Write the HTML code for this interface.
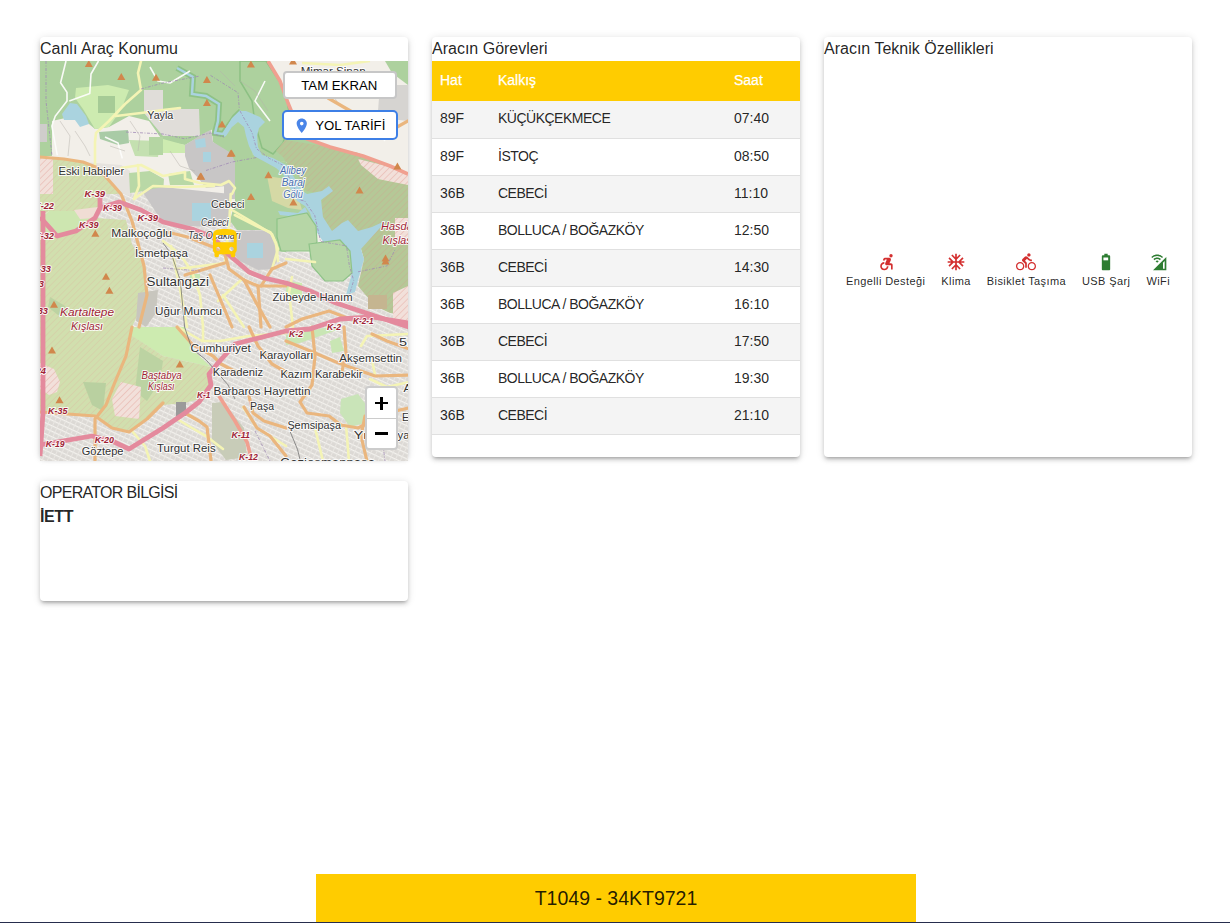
<!DOCTYPE html>
<html><head><meta charset="utf-8">
<style>
*{box-sizing:border-box;margin:0;padding:0}
html,body{width:1230px;height:923px;overflow:hidden;background:#fff;font-family:"Liberation Sans",sans-serif;color:rgba(0,0,0,0.87)}
.card{position:absolute;background:#fff;border-radius:4px;box-shadow:0px 3px 3px -2px rgba(0,0,0,0.2),0px 3px 4px 0px rgba(0,0,0,0.14),0px 1px 8px 0px rgba(0,0,0,0.12)}
.ttl{position:absolute;left:0;top:0;height:24px;line-height:24px;font-size:16px;white-space:nowrap}
#c1{left:40px;top:37px;width:368px;height:420px}
#c2{left:432px;top:37px;width:368px;height:420px;overflow:hidden}
#c3{left:824px;top:37px;width:368px;height:420px}
#c4{left:40px;top:481px;width:368px;height:120px}
#map{position:absolute;left:0;top:24px;width:368px;height:400px;overflow:hidden;background:#f2efe9}
table{position:absolute;left:0;top:24px;width:368px;border-collapse:collapse;font-size:14px}
th{background:#ffcc00;color:#fff;height:40px;text-align:left;font-weight:normal;padding:0 8px 2px 8px;-webkit-text-stroke:0.25px #fff}
td{height:37px;border-bottom:1px solid #e0e0e0;padding:0 8px 2px 8px}
td:nth-child(2){letter-spacing:-0.5px}
tr.g td{background:#f4f4f4}
.feat{position:absolute;top:215px;left:0;width:368px;display:flex;justify-content:center}
.f{display:flex;flex-direction:column;align-items:center;margin:0 8px;font-size:11px;letter-spacing:0.4px}
.f span{margin-top:3.2px;line-height:13px;color:rgba(0,0,0,0.87)}
.f svg{width:20px;height:20px;display:block}
#foot{position:absolute;left:316px;top:874px;width:600px;height:48px;background:#ffcc00;font-size:19.5px;text-align:center;line-height:48px;color:rgba(0,0,0,0.87)}
.mbtn{position:absolute;background:#fff;border-radius:4px;font-family:"Liberation Sans",sans-serif;font-size:13px;color:#000}
.mbtn span{position:absolute;top:0;line-height:24px;white-space:nowrap}
#line{position:absolute;left:0;top:922px;width:1230px;height:1px;background:#262d4d}
</style></head><body>
<div class="card" id="c1"><div class="ttl">Canlı Araç Konumu</div>
<div id="map"><svg width="368" height="400" viewBox="0 0 368 400" style="position:absolute;left:0;top:0;display:block">
<defs>
<pattern id="hO" width="4.6" height="4.6" patternUnits="userSpaceOnUse" patternTransform="rotate(45)"><rect width="4.6" height="4.6" fill="#d1dfae"/><rect width="0.6" height="4.6" fill="#dab99f" opacity="0.55"/></pattern>
<pattern id="hD" width="4.6" height="4.6" patternUnits="userSpaceOnUse" patternTransform="rotate(45)"><rect width="4.6" height="4.6" fill="#b5c897"/><rect width="0.6" height="4.6" fill="#d0a18e" opacity="0.55"/></pattern>
<pattern id="hP" width="4.6" height="4.6" patternUnits="userSpaceOnUse" patternTransform="rotate(45)"><rect width="4.6" height="4.6" fill="#f2e0da"/><rect width="0.6" height="4.6" fill="#e3a49a" opacity="0.7"/></pattern>
<pattern id="urb" width="5" height="5" patternUnits="userSpaceOnUse" patternTransform="rotate(25)"><rect width="5" height="5" fill="#dcd9d5"/><rect width="5" height="1.2" fill="#f4f2ee"/><rect width="0.9" height="5" fill="#ebe8e4"/></pattern>
</defs>
<rect width="368" height="400" fill="#f2efe9"/>

<!-- urban base -->
<polygon fill="url(#urb)" points="0,345 20,300 40,140 60,112 123,128 200,160 246,190 369,200 369,400 0,400"/>

<polygon fill="#e6e3de" points="43,101 81,104 90,110 90,135 60,125"/>
<polygon fill="#b9d8a6" points="89,112 110,110 124,118 123,132 105,130 90,132"/>
<polygon fill="#b9d8a6" points="128,113 150,110 154,124 130,124"/>
<polygon fill="#c4e0b0" points="89,79 120,80 118,96 95,95"/>
<polygon fill="#d9d7d3" points="104,29 123,29 123,49 104,49"/>
<polygon fill="#d6d4d1" points="340,24 368,24 368,60 350,58 338,50"/>

<!-- forest top -->
<polygon fill="#add19e" points="0,0 228,0 240,20 248,42 262,76 290,86 246,93 246,100 227,101 213,93 207,80 204,69 195,60 171,69 145,84 123,80 109,60 89,55 69,66 55,68 49,63 30,56 12,60 12,95 0,95"/>
<polygon fill="#add19e" points="345,0 368,0 368,24 352,12"/>
<path d="M262,2 L300,4 330,0" fill="none" stroke="#f4f4b5" stroke-width="2.6"/>
<polygon fill="#add19e" points="246,78 318,92 300,95 246,98"/>

<polygon fill="#cdebb0" points="35,37 36,27 68,24 89,29 81,49 69,66 55,68 43,48"/>
<polygon fill="#a6cb96" points="58,35 75,35 75,52 58,52"/>
<polygon fill="#aad3df" points="22,53 30,42 37,43 46,55 49,63 40,66 35,59 24,59"/>
<polygon fill="#a9cba6" points="59,71 88,69 89,82 78,84 60,78"/>
<polygon fill="#cfcdcb" points="0,63 7,63 7,81 0,81"/>
<polygon fill="#b5d6a3" points="109,76 123,76 123,94 109,94"/>
<polygon fill="#cdebb0" points="123,78 145,84 145,92 123,92"/>
<polygon fill="#e0ddd9" points="104,29 123,29 123,48 159,48 160,75 123,75 104,52"/>
<polygon fill="#add19e" stroke="#8cc083" stroke-width="1.5" points="200,0 226,0 246,30 250,60 243,82 233,93 222,87 215,62 212,40 200,20"/>

<polygon fill="#add19e" points="171,60 204,60 210,80 213,93 200,110 190,95 173,81"/>
<polygon fill="#add19e" points="240,100 275,110 290,125 300,170 246,160"/>
<path d="M137,7 L153,16 152,33 166,35 179,43 178,60 175,72 183,73 195,56 201,50" fill="none" stroke="#8fc286" stroke-width="6"/>
<path d="M137,7 L153,16 152,33 166,35 179,43 178,60 175,72 183,73 195,56 201,50" fill="none" stroke="#aad3df" stroke-width="2.5"/>
<!-- quarries -->
<polygon fill="#c8c6c6" points="145,84 166,71 171,69 173,81 191,92 195,101 195,115 186,125 166,127 159,118 149,107 145,95"/>
<polygon fill="#aad3df" points="155,79 165,77 166,86 156,87"/>
<polygon fill="#aad3df" points="163,91 171,91 171,101 163,101"/>
<polygon fill="#aad3df" points="186,108 192,108 192,114 186,114"/>
<polygon fill="#add19e" points="195,101 213,93 227,101 246,100 246,191 237,190 229,169 197,169 190,160 195,140"/>
<polygon fill="#d5d9a5" points="227,115 246,118 258,135 262,149 248,147 232,140"/>
<polygon fill="#c8c6c6" points="102,130 123,126 191,133 191,162 173,166 150,165 123,162"/>
<polygon fill="#aad3df" points="152,142 171,142 171,160 152,160"/>
<polygon fill="#c8c6c6" points="184,100 195,100 195,138 184,138"/>
<polygon fill="#c8c6c6" points="192,170 229,169 236,187 237,200 232,208 218,209 198,199 191,188"/>
<polygon fill="#aad3df" points="207,182 223,182 223,197 207,197"/>

<!-- military hatched TR -->
<polygon fill="url(#hD)" points="236,90 245,79 290,86 318,92 368,112 368,254 350,252 335,245 318,225 324,198 321,188 321,176 300,176 290,170 281,155 282,133 266,130 258,115 249,106 243,96"/>
<polygon fill="url(#hP)" points="318,98 355,107 368,112 368,124 338,118 321,104"/>
<polygon fill="url(#hP)" points="355,157 368,157 368,182 355,182"/>
<polygon fill="url(#hP)" points="353,232 368,225 368,266 353,260"/>
<polygon fill="#c5b590" points="328,234 347,234 347,248 328,248"/>
<!-- reservoir -->
<polygon fill="#aad3df" points="184,70 192,57 200,50 206,50 220,56 225,61 219,67 217,75 218,86 222,94 233,97 246,104 254,116 261,129 267,133 282,130 289,125 293,130 281,139 283,156 292,170 302,162 308,159 318,170 332,166 347,159 321,188 324,198 318,219 315,231 306,234 312,212 310,190 300,183 284,182 276,170 270,152 265,145 257,140 250,127 243,113 236,107 227,102 214,95 209,85 206,75 204,66 198,61 192,66 186,75 184,76"/>
<polygon fill="#aad3df" points="238,150 258,152 265,146 268,152 258,156 240,154"/>
<!-- forest blobs -->
<polygon fill="#b6d6a6" stroke="#8ec388" stroke-width="1.2" points="237,158 251,155 267,152 276,165 277,181 270,190 241,190 237,176"/>
<polygon fill="#b6d6a6" stroke="#8ec388" stroke-width="1.2" points="269,183 300,179 310,190 312,212 303,220 285,220 272,205"/>

<!-- military hatched BL -->
<polygon fill="#cde6b0" points="0,158 9,150 60,140 55,157 36,170 17,175 6,178 0,180"/>
<polygon fill="url(#hP)" points="0,96 13,98 13,133 0,133"/>
<polygon fill="url(#hO)" points="13,98 24,98 43,101 58,107 81,133 60,133 60,147 36,150 9,150 0,156 0,133 13,133"/>
<polygon fill="url(#hO)" points="3,176 17,175 36,170 55,157 86,159 92,183 104,205 107,234 92,266 86,295 75,321 66,344 55,355 0,351 0,176"/>
<polygon fill="#f0ddd4" points="34,149 58,146 55,157 40,158"/>
<polygon fill="#bcd3a2" points="10,236 25,245 28,252 18,254 8,246"/>
<polygon fill="url(#hP)" points="0,302 14,308 20,321 17,331 9,334 0,328"/>
<polygon fill="#b9d0a0" points="43,321 66,322 63,350 52,344"/>
<polygon fill="#cdebb0" points="92,266 123,266 145,266 152,288 171,306 123,295 92,275"/>
<polygon fill="#c8c6be" points="98,232 118,229 116,252 106,266 96,260"/>
<polygon fill="url(#hO)" points="88,272 123,295 171,306 171,326 159,338 145,342 123,344 107,358 89,371 72,367 55,355 66,344 75,321 86,295"/>
<polygon fill="#bcd3a2" points="100,286 123,300 120,320 107,340 95,330"/>
<polygon fill="url(#hP)" points="81,321 101,326 99,358 75,355 72,338"/>
<polygon fill="#9a9a9a" points="136,341 146,341 146,355 136,355"/>
<polygon fill="#c8ccb8" points="172,342 183,341 204,367 207,396 186,399 172,381"/>
<polygon fill="#cdebb0" points="246,220 262,222 262,240 246,236"/>
<polygon fill="#c6e8b4" points="150,213 160,213 160,226 150,226"/>
<polygon fill="#c9e4b8" points="301,338 318,333 327,345 325,362 310,366 300,352"/>
<polygon fill="#c9e6b4" points="246,274 290,266 300,268 260,282 246,284"/>
<polygon fill="#c9e6b4" points="290,280 300,276 304,290 292,292"/>

<g fill="none" stroke="#fdfdfb" stroke-width="1.6" stroke-linejoin="round" opacity="0.95">
<path d="M26,0 L20.6,21.7 27,31.4 27,40 15.2,55.3 11.9,65 17.3,94.3"/>
<path d="M58.5,0 L51,13 49.8,32.5 29.3,40"/>
<path d="M65,76 L78,82 82.3,97.5"/>
<path d="M110,6 L118,20 130,22 150,10"/>
<path d="M300,55 L330,60 345,80"/>
<path d="M230,60 L215,40 225,20"/>
</g>
<g fill="none" stroke="#b7b3ad" stroke-width="0.6" opacity="0.8">
<path d="M20,60 L30,75 28,95"/>
<path d="M35,70 L45,85 50,95"/>
<path d="M90,60 L100,75 98,90"/>
<path d="M70,85 L85,90"/>
<path d="M130,90 L140,105 155,110"/>
<path d="M200,20 L215,30 228,50"/>
<path d="M180,10 L195,25"/>
<path d="M270,20 L290,30 300,45"/>
</g>
<!-- roads secondary -->
<g fill="none" stroke="#f4f4b5" stroke-width="2.6" stroke-linejoin="round" stroke-linecap="round">
<path d="M101,0 L98,12 101,29 85,43 69,60 56,72 55,81 55,104"/>
<path d="M76,55 L101,52 123,49 140,47"/>
<path d="M81,107 L101,104 123,115 145,111 145,118 160,122 181,124 189,120 195,127 192,133"/>
<path d="M98,104 L99,125 94,138"/>
<path d="M94,138 L113,125 140,126 174,125"/>
<path d="M190.7,133 L189.3,161.8 184.9,202.1"/>
<path d="M192,149 L209,159 232,173 238,188 232,208"/>
<path d="M194.8,154 L216.5,165 230.6,171.5 236,182 238,200"/>
<path d="M123,180 L140,193 152,211 160,234 163,266"/>
<path d="M131,185 L141,233 147,266"/>
<path d="M137,208 L185,202"/>
<path d="M178,240 L201,219"/>
<path d="M183,234 L198,257 204,266"/>
<path d="M246,198 L275,201"/>
<path d="M252,216 L249,232 253,266"/>
<path d="M138,266 L162,280 180,280 209,275 246,272"/>
<path d="M163,266 L163,280"/>
<path d="M137,358 L152,367 166,375 183,388"/>
<path d="M203,346 L217,367 246,385"/>
<path d="M321,285 L327,275 369,273"/>
<path d="M332,299 L335,314"/>
<path d="M330,318 L347,326 369,321"/>
<path d="M306,364 L309,400"/>
<path d="M275,367 L283,400"/>
<path d="M92,370 L105,385 110,400"/>
<path d="M270,232 L296,242"/>
</g>
<!-- primary -->
<g fill="none" stroke="#eab67e" stroke-width="3.2" stroke-linejoin="round" stroke-linecap="round">
<path d="M0,96 L24,98 43,101 58,107 81,133 92,160 104,205 107,234 99,266"/>
<path d="M92,266 L86,295 75,321 66,344 55,358 55,399"/>
<path d="M0,351 L55,355 72,367 89,371 107,358 123,342"/>
<path d="M123,170 L147.5,176 173,186 185,193.5"/>
<path d="M185,193.5 L189,208 204,219 218,225 246,225"/>
<path d="M145,214 L185,202"/>
<path d="M218,225 L221,266"/>
<path d="M204,219 L218,245 230,266"/>
<path d="M232,208 L221,225"/>
<path d="M232,208 L246,202"/>
<path d="M170,214 L181,240 192,266"/>
<path d="M246,266 L262,258 289,250 310,258"/>
<path d="M246,280 L275,292 296,301 318,309 335,315 369,314"/>
<path d="M272,266 L275,295 272,324 260,341 267,352 289,355 301,364 318,367 332,360 347,352 369,347"/>
<path d="M304,266 L306,292 301,315"/>
<path d="M332,273 L347,280 369,288"/>
<path d="M325,355 L321,375 327,400"/>
<path d="M137,266 L152,283 173,295 181,303 198,312"/>
<path d="M209,266 L218,285 232,303 246,311"/>
<path d="M145,352 L159,360 167,366 171,400"/>
<path d="M209,335 L213,352 224,360 246,367"/>
<path d="M204,346 L217,367 230,375 246,395"/>
<path d="M288,37 L314,52 331,65"/>
<path d="M350,70 L368,60"/>
</g>
<!-- trunk -->
<g fill="none" stroke="#f0a090" stroke-width="3.6" stroke-linejoin="round">
<path d="M228,0 L240,20 248,42 262,76 290,86 323,95 350,105 368,113"/>
<path d="M179,335 L195,360 207,381 212,400"/>
</g>
<!-- motorways -->
<g fill="none" stroke="#e48a9d" stroke-width="4.8" stroke-linejoin="round">
<path d="M0,156 L9,166 17,175 36,170 55,157 60,147 60,133"/>
<path d="M60,147 L79,141 101,149 123,161 152,168 173,176 188,193 209,211 224,217 246,222 270,230 296,242 332,254 369,266"/>
<path d="M3,150 L3,352 0,395"/>
<path d="M0,384 L52,375 72,380 89,388 123,367 145,352 159,341 171,324 169,313 178,302 195,283 246,270 270,268 300,258 332,256 369,262"/>
</g>
<!-- admin boundaries -->
<g fill="none" stroke="#9f88b5" stroke-width="1" stroke-dasharray="3,1.5,1,1.5" opacity="0.75">
<path d="M6,0 L6,40 12,95"/>
<path d="M101,28 L123,22 160,15"/>
<path d="M86,71 L123,73 144.6,77.8 170.5,72 184,76"/>
<path d="M123,207 L160,210"/>
<path d="M200,50 L212,71.5 216.5,87.7 229.5,97.5 242.5,104 251,120 260,139 264.7,140 274.8,154.6 280.6,180.5 306.5,184.9 309.4,205 313.7,219.4 309.4,233.8"/>
<path d="M166,109.5 L192,101 216.6,96.5"/>
<path d="M170.5,14.4 L198,31.7 199.3,47.5"/>
<path d="M318,210.8 L346.8,205 355.5,187.7"/>
<path d="M215,370 L230,400"/>
<path d="M330,330 L340,360 345,400"/>
</g>
<g fill="none" stroke="#6f6f6f" stroke-width="0.9" opacity="0.85">
<path d="M123,182 L131.6,193.5 140.3,219.4 144.6,266 151.8,287.6 166.2,299 187.8,323.6 195,338"/>
<path d="M250.3,371 L257.5,388.4 260.4,400"/>
</g>
<g font-family="Liberation Sans, sans-serif" stroke="#ffffff" stroke-opacity="0.85" stroke-width="2" paint-order="stroke" stroke-linejoin="round">
<text x="260.7" y="13.5" textLength="65" lengthAdjust="spacingAndGlyphs" fill="#333333" font-size="11">Mimar Sinan</text>
<text x="107.3" y="57.6" textLength="26" lengthAdjust="spacingAndGlyphs" fill="#333333" font-size="11">Yayla</text>
<text x="18.5" y="114.1" textLength="65.8" lengthAdjust="spacingAndGlyphs" fill="#333333" font-size="11">Eski Habipler</text>
<text x="171.0" y="147.4" textLength="33.4" lengthAdjust="spacingAndGlyphs" fill="#333333" font-size="11">Cebeci</text>
<text x="161.0" y="165.4" textLength="27.5" lengthAdjust="spacingAndGlyphs" fill="#3a3a3a" font-size="10" font-style="italic">Cebeci</text>
<text x="148.0" y="177.6" textLength="52.8" lengthAdjust="spacingAndGlyphs" fill="#3a3a3a" font-size="10" font-style="italic">Taş Ocakları</text>
<text x="71.3" y="176.2" textLength="60.7" lengthAdjust="spacingAndGlyphs" fill="#333333" font-size="11">Malkoçoğlu</text>
<text x="95.0" y="196.4" textLength="53" lengthAdjust="spacingAndGlyphs" fill="#333333" font-size="11">İsmetpaşa</text>
<text x="106.6" y="225.2" textLength="62.4" lengthAdjust="spacingAndGlyphs" fill="#333333" font-size="13">Sultangazi</text>
<text x="115.0" y="254.0" textLength="67" lengthAdjust="spacingAndGlyphs" fill="#333333" font-size="11">Uğur Mumcu</text>
<text x="232.5" y="239.6" textLength="80" lengthAdjust="spacingAndGlyphs" fill="#333333" font-size="11">Zübeyde Hanım</text>
<text x="20.0" y="255.4" textLength="54" lengthAdjust="spacingAndGlyphs" fill="#a01f36" font-size="11" font-style="italic">Kartaltepe</text>
<text x="31.0" y="268.5" textLength="32" lengthAdjust="spacingAndGlyphs" fill="#a01f36" font-size="11" font-style="italic">Kışlası</text>
<text x="341.0" y="169.0" textLength="34" lengthAdjust="spacingAndGlyphs" fill="#a01f36" font-size="11" font-style="italic">Hasdal</text>
<text x="342.5" y="183.4" textLength="32" lengthAdjust="spacingAndGlyphs" fill="#a01f36" font-size="11" font-style="italic">Kışlası</text>
<text x="240.0" y="113.4" textLength="26" lengthAdjust="spacingAndGlyphs" fill="#4a6fb0" font-size="10" font-style="italic">Alibey</text>
<text x="241.7" y="125.3" textLength="23.3" lengthAdjust="spacingAndGlyphs" fill="#4a6fb0" font-size="10" font-style="italic">Baraj</text>
<text x="243.3" y="136.7" textLength="19.5" lengthAdjust="spacingAndGlyphs" fill="#4a6fb0" font-size="10" font-style="italic">Gölü</text>
<text x="150.4" y="290.5" textLength="60.5" lengthAdjust="spacingAndGlyphs" fill="#333333" font-size="11">Cumhuriyet</text>
<text x="219.5" y="298.0" textLength="54" lengthAdjust="spacingAndGlyphs" fill="#333333" font-size="11">Karayolları</text>
<text x="299.3" y="300.6" textLength="62.7" lengthAdjust="spacingAndGlyphs" fill="#333333" font-size="11">Akşemsettin</text>
<text x="172.7" y="315.0" textLength="50.3" lengthAdjust="spacingAndGlyphs" fill="#333333" font-size="11">Karadeniz</text>
<text x="240.4" y="317.1" textLength="82" lengthAdjust="spacingAndGlyphs" fill="#333333" font-size="11">Kazım Karabekir</text>
<text x="101.5" y="318.0" textLength="40.2" lengthAdjust="spacingAndGlyphs" fill="#a01f36" font-size="10" font-style="italic">Baştabya</text>
<text x="108.0" y="329.4" textLength="26.5" lengthAdjust="spacingAndGlyphs" fill="#a01f36" font-size="10" font-style="italic">Kışlası</text>
<text x="173.4" y="334.4" textLength="97" lengthAdjust="spacingAndGlyphs" fill="#333333" font-size="11">Barbaros Hayrettin</text>
<text x="210.0" y="349.0" textLength="24" lengthAdjust="spacingAndGlyphs" fill="#333333" font-size="11">Paşa</text>
<text x="247.4" y="368.0" textLength="53.6" lengthAdjust="spacingAndGlyphs" fill="#333333" font-size="11">Şemsipaşa</text>
<text x="117.0" y="390.6" textLength="58.6" lengthAdjust="spacingAndGlyphs" fill="#333333" font-size="11">Turgut Reis</text>
<text x="41.8" y="394.0" textLength="41.7" lengthAdjust="spacingAndGlyphs" fill="#333333" font-size="11">Göztepe</text>
<text x="240.0" y="406.0" textLength="95" lengthAdjust="spacingAndGlyphs" fill="#333333" font-size="13">Gaziosmanpaşa</text>
<text x="313.7" y="378.3" textLength="16.5" lengthAdjust="spacingAndGlyphs" fill="#333333" font-size="11">Yıl</text>
<text x="357.5" y="378.3" textLength="12" lengthAdjust="spacingAndGlyphs" fill="#333333" font-size="11">ya</text>
<text x="359.0" y="285.0" textLength="12" lengthAdjust="spacingAndGlyphs" fill="#333333" font-size="11">5.</text>
<text x="363.5" y="331.0" textLength="8" lengthAdjust="spacingAndGlyphs" fill="#333333" font-size="11">A</text>
<text x="362.0" y="360.0" textLength="7" lengthAdjust="spacingAndGlyphs" fill="#333333" font-size="11">E</text>
<text x="44.4" y="135.5" textLength="20.6" lengthAdjust="spacingAndGlyphs" fill="#a01f36" font-size="9" font-style="italic" font-weight="bold">K-39</text>
<text x="63.0" y="149.5" textLength="19" lengthAdjust="spacingAndGlyphs" fill="#a01f36" font-size="9" font-style="italic" font-weight="bold">K-39</text>
<text x="39.0" y="167.0" textLength="19.5" lengthAdjust="spacingAndGlyphs" fill="#a01f36" font-size="9" font-style="italic" font-weight="bold">K-39</text>
<text x="97.5" y="160.4" textLength="20.5" lengthAdjust="spacingAndGlyphs" fill="#a01f36" font-size="9" font-style="italic" font-weight="bold">K-39</text>
<text x="-6.0" y="148.0" textLength="20" lengthAdjust="spacingAndGlyphs" fill="#a01f36" font-size="9" font-style="italic" font-weight="bold">K-22</text>
<text x="-6.0" y="177.6" textLength="20" lengthAdjust="spacingAndGlyphs" fill="#a01f36" font-size="9" font-style="italic" font-weight="bold">K-32</text>
<text x="-9.0" y="210.8" textLength="20" lengthAdjust="spacingAndGlyphs" fill="#a01f36" font-size="9" font-style="italic" font-weight="bold">K-33</text>
<text x="-16.0" y="226.0" textLength="20" lengthAdjust="spacingAndGlyphs" fill="#a01f36" font-size="9" font-style="italic" font-weight="bold">K-33</text>
<text x="-12.0" y="252.5" textLength="20" lengthAdjust="spacingAndGlyphs" fill="#a01f36" font-size="9" font-style="italic" font-weight="bold">K-33</text>
<text x="-14.0" y="313.0" textLength="20" lengthAdjust="spacingAndGlyphs" fill="#a01f36" font-size="9" font-style="italic" font-weight="bold">K-24</text>
<text x="8.0" y="353.0" textLength="19.4" lengthAdjust="spacingAndGlyphs" fill="#a01f36" font-size="9" font-style="italic" font-weight="bold">K-35</text>
<text x="5.8" y="385.5" textLength="18.7" lengthAdjust="spacingAndGlyphs" fill="#a01f36" font-size="9" font-style="italic" font-weight="bold">K-19</text>
<text x="54.7" y="382.0" textLength="19.3" lengthAdjust="spacingAndGlyphs" fill="#a01f36" font-size="9" font-style="italic" font-weight="bold">K-20</text>
<text x="157.0" y="337.0" textLength="13.5" lengthAdjust="spacingAndGlyphs" fill="#a01f36" font-size="9" font-style="italic" font-weight="bold">K-1</text>
<text x="191.4" y="377.0" textLength="18.6" lengthAdjust="spacingAndGlyphs" fill="#a01f36" font-size="9" font-style="italic" font-weight="bold">K-11</text>
<text x="199.0" y="398.5" textLength="19" lengthAdjust="spacingAndGlyphs" fill="#a01f36" font-size="9" font-style="italic" font-weight="bold">K-12</text>
<text x="249.0" y="276.0" textLength="14" lengthAdjust="spacingAndGlyphs" fill="#a01f36" font-size="9" font-style="italic" font-weight="bold">K-2</text>
<text x="287.0" y="269.0" textLength="14" lengthAdjust="spacingAndGlyphs" fill="#a01f36" font-size="9" font-style="italic" font-weight="bold">K-2</text>
<text x="313.0" y="263.0" textLength="20.5" lengthAdjust="spacingAndGlyphs" fill="#a01f36" font-size="9" font-style="italic" font-weight="bold">K-2-1</text>
</g>
<g fill="#d1874c">
<path d="M44.8,6.1 L48.8,-0.9 L52.8,6.1Z"/>
<path d="M77.3,19.1 L81.3,12.1 L85.3,19.1Z"/>
<path d="M112.0,19.8 L116.0,12.8 L120.0,19.8Z"/>
<path d="M162.9,21.9 L166.9,14.9 L170.9,21.9Z"/>
<path d="M162.9,45.1 L166.9,38.1 L170.9,45.1Z"/>
<path d="M178.0,66.5 L182.0,59.5 L186.0,66.5Z"/>
<path d="M156.4,118.4 L160.4,111.4 L164.4,118.4Z"/>
<path d="M51.3,175.8 L55.3,168.8 L59.3,175.8Z"/>
<path d="M187.6,95.5 L191.6,88.5 L195.6,95.5Z"/>
<path d="M224.4,117.3 L228.4,110.3 L232.4,117.3Z"/>
<path d="M207.0,139.0 L211.0,132.0 L215.0,139.0Z"/>
<path d="M249.4,144.5 L253.4,137.5 L257.4,144.5Z"/>
<path d="M315.5,132.5 L319.5,125.5 L323.5,132.5Z"/>
<path d="M353.4,108.5 L357.4,101.5 L361.4,108.5Z"/>
<path d="M341.5,200.5 L345.5,193.5 L349.5,200.5Z"/>
<path d="M249.0,3.5 L253.0,-3.5 L257.0,3.5Z"/>
<path d="M206.9,6.5 L210.9,-0.5 L214.9,6.5Z"/>
<path d="M186.7,95.7 L190.7,88.7 L194.7,95.7Z"/>
<path d="M157.2,118.7 L161.2,111.7 L165.2,118.7Z"/>
<path d="M62.0,218.7 L66.0,211.7 L70.0,218.7Z"/>
<path d="M65.4,232.8 L69.4,225.8 L73.4,232.8Z"/>
<path d="M10.0,246.8 L14.0,239.8 L18.0,246.8Z"/>
<path d="M8.0,292.4 L12.0,285.4 L16.0,292.4Z"/>
<path d="M15.5,342.2 L19.5,335.2 L23.5,342.2Z"/>
<path d="M135.8,306.5 L139.8,299.5 L143.8,306.5Z"/>
<path d="M341.5,203.5 L345.5,196.5 L349.5,203.5Z"/>
</g>
</svg>
<svg style="position:absolute;left:166.75px;top:164.5px;width:35.7px;height:35.7px" viewBox="0 0 24 24"><path fill="#ffcc00" d="M4 16c0 .88.39 1.67 1 2.22V20c0 .55.45 1 1 1h1c.55 0 1-.45 1-1v-1h8v1c0 .55.45 1 1 1h1c.55 0 1-.45 1-1v-1.78c.61-.55 1-1.34 1-2.22V6c0-3.5-3.58-4-8-4s-8 .5-8 4v10zm3.5 1c-.83 0-1.5-.67-1.5-1.5S6.67 14 7.5 14s1.5.67 1.5 1.5S8.33 17 7.5 17zm9 0c-.83 0-1.5-.67-1.5-1.5s.67-1.5 1.5-1.5 1.5.67 1.5 1.5-.67 1.5-1.5 1.5zm1.5-6H6V6h12v5z"/></svg>
<div class="mbtn" style="left:243px;top:10.2px;width:114.2px;height:28.2px;border:2px solid rgba(0,0,0,0.22)"><span style="left:16.3px;top:0.8px;font-size:13.2px">TAM EKRAN</span></div>
<div class="mbtn" style="left:242.2px;top:49.2px;width:115.8px;height:29.5px;border:2px solid #3d7fe6;border-radius:5px"><svg style="position:absolute;left:9px;top:4.5px;width:17.5px;height:17.5px" viewBox="0 0 24 24"><path fill="#4a85e8" d="M12 2C8.13 2 5 5.13 5 9c0 5.25 7 13 7 13s7-7.75 7-13c0-3.87-3.13-7-7-7zm0 9.5a2.5 2.5 0 0 1 0-5 2.5 2.5 0 0 1 0 5z"/></svg><span style="left:31px;top:1.8px;font-size:13.2px">YOL TARİFİ</span></div>
<div style="position:absolute;left:324.6px;top:325.3px;width:33.2px;height:63.5px;border:2px solid rgba(0,0,0,0.2);border-radius:4px;background:#fff">
<div style="position:absolute;left:0;top:30px;width:29.2px;height:1px;background:#ccc"></div>
<div style="position:absolute;left:8.1px;top:13.4px;width:13px;height:2.8px;background:#000"></div>
<div style="position:absolute;left:13.2px;top:8.3px;width:2.8px;height:13px;background:#000"></div>
<div style="position:absolute;left:8.6px;top:44.2px;width:12.5px;height:2.8px;background:#000"></div>
</div>
</div>
</div>
<div class="card" id="c2"><div class="ttl">Aracın Görevleri</div>
<table>
<tr><th style="width:58px">Hat</th><th style="width:236px">Kalkış</th><th>Saat</th></tr>
<tr class="g"><td>89F</td><td>KÜÇÜKÇEKMECE</td><td>07:40</td></tr>
<tr><td>89F</td><td>İSTOÇ</td><td>08:50</td></tr>
<tr class="g"><td>36B</td><td>CEBECİ</td><td>11:10</td></tr>
<tr><td>36B</td><td>BOLLUCA / BOĞAZKÖY</td><td>12:50</td></tr>
<tr class="g"><td>36B</td><td>CEBECİ</td><td>14:30</td></tr>
<tr><td>36B</td><td>BOLLUCA / BOĞAZKÖY</td><td>16:10</td></tr>
<tr class="g"><td>36B</td><td>CEBECİ</td><td>17:50</td></tr>
<tr><td>36B</td><td>BOLLUCA / BOĞAZKÖY</td><td>19:30</td></tr>
<tr class="g"><td>36B</td><td>CEBECİ</td><td>21:10</td></tr>
</table>
</div>
<div class="card" id="c3"><div class="ttl">Aracın Teknik Özellikleri</div>
<div class="feat">
<div class="f"><svg viewBox="0 0 24 24"><g fill="#d32f2f"><circle cx="18" cy="4.54" r="2"/><path d="M15 17h-2c0 1.65-1.35 3-3 3s-3-1.35-3-3 1.35-3 3-3v-2c-2.76 0-5 2.24-5 5s2.24 5 5 5 5-2.24 5-5zm3-3.5h-1.86l1.67-3.67C18.42 8.5 17.44 7 15.96 7h-5.2c-.81 0-1.54.47-1.87 1.2L8.22 10l1.92.53.65-1.53H13l-1.83 4.1c-.6 1.33.39 2.9 1.85 2.9H18v5h2v-5.5c0-1.1-.9-2-2-2z"/></g></svg><span>Engelli Desteği</span></div>
<div class="f"><svg viewBox="0 0 24 24"><path fill="#d32f2f" d="M22 11h-4.17l3.24-3.24-1.41-1.42L15 11h-2V9l4.66-4.66-1.42-1.41L13 6.17V2h-2v4.17L7.76 2.93 6.34 4.34 11 9v2H9L4.34 6.34 2.93 7.76 6.17 11H2v2h4.17l-3.24 3.24 1.41 1.42L9 13h2v2l-4.66 4.66 1.42 1.41L11 17.83V22h2v-4.17l3.24 3.24 1.42-1.41L13 15v-2h2l4.66 4.66 1.41-1.42L17.83 13H22z"/></svg><span>Klima</span></div>
<div class="f"><svg viewBox="0 0 24 24"><path fill="#d32f2f" d="M15.5 5.5c1.1 0 2-.9 2-2s-.9-2-2-2-2 .9-2 2 .9 2 2 2zM5 12c-2.8 0-5 2.2-5 5s2.2 5 5 5 5-2.2 5-5-2.2-5-5-5zm0 8.5c-1.9 0-3.5-1.6-3.5-3.5s1.6-3.5 3.5-3.5 3.5 1.6 3.5 3.5-1.6 3.5-3.5 3.5zm5.8-10l2.4-2.4.8.8c1.3 1.3 3 2.1 5.1 2.1V9c-1.5 0-2.7-.6-3.6-1.5l-1.9-1.9c-.5-.4-1-.6-1.6-.6s-1.1.2-1.4.6L7.8 8.4c-.4.4-.6.9-.6 1.4 0 .6.2 1.1.6 1.4L11 14v5h2v-6.2l-2.2-2.3zM19 12c-2.8 0-5 2.2-5 5s2.2 5 5 5 5-2.2 5-5-2.2-5-5-5zm0 8.5c-1.9 0-3.5-1.6-3.5-3.5s1.6-3.5 3.5-3.5 3.5 1.6 3.5 3.5-1.6 3.5-3.5 3.5z"/></svg><span>Bisiklet Taşıma</span></div>
<div class="f"><svg viewBox="0 0 24 24"><path fill="#2e7d32" d="M15.67 4H14V2h-4v2H8.33C7.6 4 7 4.6 7 5.33v15.33C7 21.4 7.6 22 8.33 22h7.33c.74 0 1.34-.6 1.34-1.33V5.33C17 4.6 16.4 4 15.67 4z"/><rect x="8.9" y="6.6" width="5.7" height="3.4" fill="#fff"/></svg><span>USB Şarj</span></div>
<div class="f"><svg viewBox="0 0 24 24"><path fill="#2e7d32" d="M18 9.98L6 22h16V5.97l-4 4.01zM20 20h-2v-7.22l2-2V20zM5.22 7.22L3.93 5.93c3.9-3.91 10.24-3.91 14.15 0l-1.29 1.29c-3.19-3.19-8.38-3.19-11.57 0zm7.71 3.85L11 13l-1.93-1.93c1.07-1.06 2.79-1.06 3.86 0zm1.29-1.28c-1.78-1.77-4.66-1.77-6.43 0L6.5 8.5c2.48-2.48 6.52-2.48 9 0l-1.28 1.29z"/></svg><span>WiFi</span></div>
</div>
</div>
<div class="card" id="c4"><div class="ttl" style="letter-spacing:-0.7px">OPERATOR BİLGİSİ</div><div style="position:absolute;top:24px;left:0;font-size:16px;font-weight:bold;line-height:24px;letter-spacing:-0.4px">İETT</div></div>
<div id="foot">T1049 - 34KT9721</div>
<div id="line"></div>
</body></html>
